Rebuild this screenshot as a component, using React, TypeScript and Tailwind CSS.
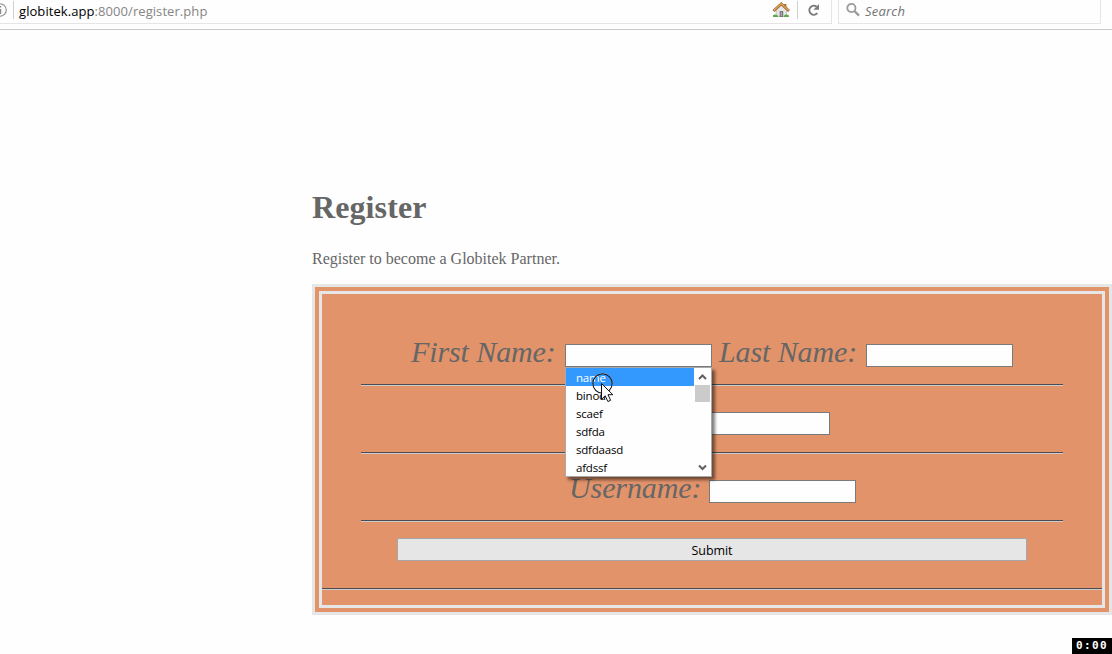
import React from "react";

const suggestions = ["name", "binod", "scaef", "sdfda", "sdfdaasd", "afdssf"];

function BrowserBar() {
  return (
    <header className="flex h-[30px] items-start border-b border-[#c8c9c9] bg-[#fefefe] font-['Open_Sans',sans-serif]">
      <div className="flex h-6 w-[832px] shrink-0 items-start border-r border-b border-[#e5e5e5]">
        <svg width="8" height="20" viewBox="0 0 8 20" className="shrink-0" fill="none" stroke="#8c8c8c">
          <circle cx="0" cy="10" r="6.3" strokeWidth="1.1" />
          <path d="M0.5 9v5M0.5 6v1.5" strokeWidth="1.5" />
        </svg>
        <div className="ml-[5px] mt-px h-[18px] w-px bg-[#cfcfcf]" />
        <div className="ml-[5px] mt-[2px] w-[753px] whitespace-nowrap text-[13px] leading-[18px] tracking-[0.07px] text-[#858585]">
          <span className="text-black">globitek.app</span>:8000/register.php
        </div>
        <svg width="18" height="18" viewBox="0 0 18 18" className="mt-[1px] shrink-0">
          <path d="M12 3h2.4v4H12z" fill="#b97836" />
          <path d="M4.2 9 9.3 4.2 14.4 9v6.4H4.2z" fill="#e8e8ea" stroke="#a7a29c" strokeWidth=".6" />
          <path d="M1.5 10 9.3 2.8 17 10" fill="none" stroke="#9b6127" strokeWidth="2.7" />
          <path d="M1.8 9.6 9.3 2.8 16.7 9.6" fill="none" stroke="#dfa253" strokeWidth="1.4" />
          <path d="M7.6 10h3.6v6H7.6z" fill="#777" />
          <path d="M8.7 11h1.3v4H8.7z" fill="#aaa" />
          <path d="M1 14.2q2-1.5 4.5 0l.8 1.8H1zM12.2 14.2q2-1.5 4.5 0l.3 1.8h-5.2z" fill="#5aa94d" />
        </svg>
        <div className="ml-[7px] mt-px h-[18px] w-px shrink-0 bg-[#cfcfcf]" />
        <svg width="14" height="14" viewBox="0 0 14 14" className="ml-[9px] mt-[3px] shrink-0">
          <path d="M10.3 10.1A4.5 4.5 0 1 1 9.6 3.6" fill="none" stroke="#7c7c7c" strokeWidth="2" />
          <path d="M12 1v5.7H6.5z" fill="#7c7c7c" />
        </svg>
      </div>
      <div className="ml-[6px] flex h-6 w-[263px] shrink-0 items-start border-x border-b border-[#e5e5e5]">
        <svg width="15" height="16" viewBox="0 0 15 16" className="ml-[7px] mt-[2px] shrink-0" fill="none" stroke="#9a9a9a">
          <circle cx="5.4" cy="6" r="4.1" strokeWidth="1.8" />
          <path d="m8.4 9 4.6 4.6" strokeWidth="2.4" />
        </svg>
        <span className="ml-[4px] mt-[2px] text-[13px] italic leading-[18px] tracking-[0.2px] text-[#737373]">Search</span>
      </div>
    </header>
  );
}

function Field() {
  return (
    <input
      type="text"
      className="mt-[16px] block h-[23px] w-[147px] shrink-0 border border-[#7a7a7c] bg-[#fefefe] px-1 text-[13px] outline-none"
    />
  );
}

function Label({ children, className }: { children: string; className: string }) {
  return (
    <label className={`mt-[7px] block shrink-0 whitespace-nowrap text-[30px] italic leading-[34px] tracking-[-0.1px] ${className}`}>
      {children}
    </label>
  );
}

function Divider() {
  return <div className="h-[2px] border-t border-b border-t-[#4b4d50] border-b-[#cdcdcd]" />;
}

function SuggestionPopup() {
  return (
    <div className="absolute left-[565px] top-[367px] flex h-[110px] w-[147px] border border-[#a9a9a9] bg-[#fefefe] font-['Open_Sans',sans-serif] shadow-[3px_3px_3px_rgba(0,0,0,0.5)]">
      <ul className="w-[128px] overflow-hidden text-[11.5px] leading-[20px] tracking-[-0.2px] text-black">
        {suggestions.map((s, i) => (
          <li key={s} className={`h-[18px] pl-[10px] ${i === 0 ? "bg-[#3399ff] text-white" : ""}`}>
            {s}
          </li>
        ))}
      </ul>
      <div className="flex w-[17px] flex-col items-center">
        <svg width="17" height="17" viewBox="0 0 17 17" fill="none" stroke="#606060" strokeWidth="2">
          <path d="m5 11 3.5-3.5L12 11" />
        </svg>
        <div className="h-[17px] w-[15px] bg-[#cbcbcb]" />
        <svg width="17" height="17" viewBox="0 0 17 17" className="mt-auto" fill="none" stroke="#606060" strokeWidth="2">
          <path d="m5 6.5 3.5 3.5L12 6.5" />
        </svg>
      </div>
    </div>
  );
}

function Pointer() {
  return (
    <svg width="28" height="34" viewBox="0 0 28 34" className="absolute left-[590px] top-[371px]">
      <circle cx="12.5" cy="12.5" r="10" fill="none" stroke="#fff" strokeWidth="1" opacity=".55" />
      <circle cx="12.5" cy="12.5" r="9.7" fill="none" stroke="#111" strokeWidth="1.1" />
      <path d="M11.5 12.5v15.8l3.7-3.5 2.7 5.7 2.7-1.2-2.6-5.6h4.8z" fill="#fff" stroke="#111" strokeWidth="1" />
    </svg>
  );
}

export default function App() {
  return (
    <div className="relative flex h-[654px] w-[1112px] flex-col overflow-hidden bg-[#fefefe] font-['Liberation_Serif',serif] text-[#666666]">
      <BrowserBar />
      <main className="ml-[312px] flex w-[800px] flex-col pt-[159px]">
        <h1 className="text-[32px] font-bold leading-[37px] tracking-[0.1px]">Register</h1>
        <p className="mt-[24px] text-[16px] leading-[18px]">Register to become a Globitek Partner.</p>
        <form className="mt-[16px] h-[331px] border-[10px] border-double border-[#e6e6e6] bg-[#e2936a] [background-clip:border-box]">
          <div className="ml-[39px] w-[702px] pt-[34px]">
            <div className="flex h-[56px] pl-[50px]">
              <Label className="w-[154px]">First Name:</Label>
              <Field />
              <Label className="ml-[7px] w-[147px]">Last Name:</Label>
              <Field />
            </div>
            <Divider />
            <div className="flex h-[66px] pl-[322px] pt-[10px]">
              <Field />
            </div>
            <Divider />
            <div className="flex h-[66px] pl-[208px] pt-[10px]">
              <Label className="w-[140px]">Username:</Label>
              <Field />
            </div>
            <Divider />
            <div className="flex h-[66px] pl-[36px] pt-[16px]">
              <button
                type="button"
                className="h-[23px] w-[630px] border border-[#a6a6a8] bg-[#e6e6e6] pt-[2px] font-['Open_Sans',sans-serif] text-[12.5px] leading-[19px] tracking-[-0.1px] text-black"
              >
                Submit
              </button>
            </div>
          </div>
          <Divider />
        </form>
      </main>
      <SuggestionPopup />
      <Pointer />
      <div className="absolute bottom-0 right-0 flex h-4 w-10 items-center justify-center bg-black font-['DejaVu_Sans_Mono',monospace] text-[11px] font-bold leading-4 tracking-[1.4px] text-white">
        0:00
      </div>
    </div>
  );
}
